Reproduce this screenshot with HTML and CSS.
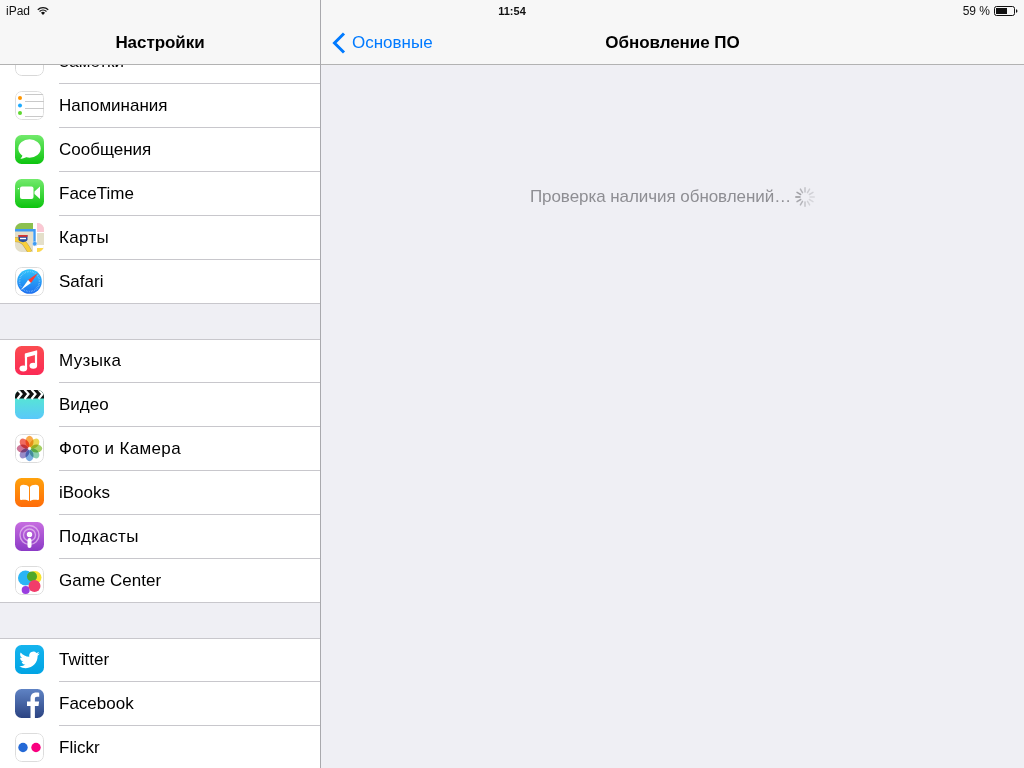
FILE: index.html
```html
<!DOCTYPE html>
<html lang="en">
  <head>
    <meta charset="UTF-8" />
    <title>Обновление ПО</title>
    <link rel="stylesheet" href="styles.css">
  </head>
  <body>
    <div class="screen">
      <div class="status-bar">
        <div class="status-left">
          <span>iPad</span>
          <svg class="wifi" width="12" height="8" viewBox="0 0 13 9">
            <path d="M0.6 3.1a8.4 8.4 0 0 1 11.8 0" fill="none" stroke="#111" stroke-width="1.3" />
            <path d="M2.6 5.1a5.6 5.6 0 0 1 7.8 0" fill="none" stroke="#111" stroke-width="1.3" />
            <path d="M4.2 6.6a3.3 3.3 0 0 1 4.6 0L6.5 9z" fill="#111" />
          </svg>
        </div>
        <div class="status-time">11:54</div>
        <div class="status-right">
          <span>59 %</span>
          <svg width="25" height="10" viewBox="0 0 25 10">
            <rect x="1.5" y="0.5" width="20" height="9" rx="2" fill="none" stroke="#111" />
            <rect x="3" y="2" width="11" height="6" fill="#111" />
            <path d="M23 3.2c1 .2 1.4.8 1.4 1.8s-.4 1.6-1.4 1.8z" fill="#111" />
          </svg>
        </div>
      </div>

      <aside class="sidebar">
        <header class="nav-bar sidebar-nav">
          <h1 class="nav-title">Настройки</h1>
        </header>
        <div class="sidebar-scroll">
          <div class="settings-list">
            <section class="group">
              <div class="row">
                <svg class="icon" viewBox="0 0 29 29">
                  <rect x=".5" y=".5" width="28" height="28" rx="6" fill="#fff" stroke="#d8d8d8" />
                </svg>
                <div class="row-label">Заметки</div>
              </div>
              <div class="row">
                <svg class="icon" viewBox="0 0 29 29">
                  <rect x=".5" y=".5" width="28" height="28" rx="6" fill="#fff" stroke="#dedede" />
                  <path d="M10 3.5H29M10 10.5H29M10 17.5H29M10 25.5H29" stroke="#c9c9c9" />
                  <circle cx="5" cy="7" r="2" fill="#ff9500" />
                  <circle cx="5" cy="14.5" r="2" fill="#1eaaff" />
                  <circle cx="5" cy="22" r="2" fill="#5ed82f" />
                </svg>
                <div class="row-label">Напоминания</div>
              </div>
              <div class="row">
                <svg class="icon" viewBox="0 0 29 29">
                  <defs>
                    <linearGradient id="gMessages" x1="0" y1="0" x2="0" y2="1">
                      <stop offset="0" stop-color="#72ea6c" />
                      <stop offset="1" stop-color="#0dc40f" />
                    </linearGradient>
                  </defs>
                  <rect width="29" height="29" fill="url(#gMessages)" />
                  <ellipse cx="14.5" cy="13.5" rx="11.2" ry="9.2" fill="#fff" />
                  <path d="M7.5 19c.2 2-.8 3.6-2.2 4.6 2.6.2 5-.7 6.4-2.2z" fill="#fff" />
                </svg>
                <div class="row-label">Сообщения</div>
              </div>
              <div class="row">
                <svg class="icon" viewBox="0 0 29 29">
                  <defs>
                    <linearGradient id="gFacetime" x1="0" y1="0" x2="0" y2="1">
                      <stop offset="0" stop-color="#72ea6c" />
                      <stop offset="1" stop-color="#0dc40f" />
                    </linearGradient>
                  </defs>
                  <rect width="29" height="29" fill="url(#gFacetime)" />
                  <rect x="5" y="7.5" width="13.5" height="12.5" rx="2" fill="#fff" />
                  <path d="M19.5 12.600l5.500-5v12.400l-5.500-5z" fill="#fff" />
                  <path d="M2.800 9h1.200v1.200h-1.200z" fill="#fff" />
                </svg>
                <div class="row-label">FaceTime</div>
              </div>
              <div class="row">
                <svg class="icon" viewBox="0 0 29 29">
                  <rect width="29" height="29" fill="#e4dfca" />
                  <rect width="18" height="6" fill="#8cc04f" />
                  <rect x="18" width="4" height="29" fill="#fff" />
                  <rect x="22" width="7" height="9" fill="#fbc8d4" />
                  <rect x="22" y="9" width="7" height="1" fill="#fff" />
                  <rect x="22" y="22" width="7" height="3" fill="#fff" />
                  <rect x="22" y="25" width="7" height="4" fill="#ffd84a" />
                  <path d="M0 16.500c8 0 10 4 15 12.500" fill="none" stroke="#b9a35e" stroke-width="5" />
                  <path d="M0 16.500c8 0 10 4 15 12.500" fill="none" stroke="#f8cf3c" stroke-width="4" />
                  <path d="M0 7.300h19.500v13" fill="none" stroke="#3f9bf2" stroke-width="2.400" />
                  <circle cx="19.700" cy="20.700" r="2.200" fill="#3f9bf2" stroke="#cfe3f5" stroke-width=".6" />
                  <path d="M3.500 12h9v4.500c0 1.500-2 2.300-4.500 2.800-2.500-.5-4.500-1.300-4.500-2.800z" fill="#2a4fa0" />
                  <rect x="3.500" y="12" width="9" height="1.800" fill="#d9362f" />
                  <rect x="5" y="14.800" width="6" height="1.400" fill="#fff" />
                </svg>
                <div class="row-label wide">Карты</div>
              </div>
              <div class="row">
                <svg class="icon" viewBox="0 0 29 29">
                  <defs>
                    <linearGradient id="gSafari" x1="0" y1="0" x2="0" y2="1">
                      <stop offset="0" stop-color="#2fc4fb" />
                      <stop offset="1" stop-color="#1d6ff0" />
                    </linearGradient>
                  </defs>
                  <rect x=".5" y=".5" width="28" height="28" rx="6" fill="#fff" stroke="#dcdcdc" />
                  <circle cx="14.5" cy="14.5" r="12.3" fill="url(#gSafari)" />
                  <circle cx="14.5" cy="14.5" r="10" fill="none" stroke="#cfeaff" stroke-width="1.6" stroke-dasharray=".5 1.2" opacity=".65" />
                  <path d="M23 6l-9.9 7.1 2.8 2.8z" fill="#ff3b30" />
                  <path d="M6 23l7.1-9.9 2.8 2.8z" fill="#fff" />
                </svg>
                <div class="row-label">Safari</div>
              </div>
            </section>

            <section class="group">
              <div class="row">
                <svg class="icon" viewBox="0 0 29 29">
                  <defs>
                    <linearGradient id="gMusic" x1="0" y1="0" x2="0" y2="1">
                      <stop offset="0" stop-color="#fb4c50" />
                      <stop offset="1" stop-color="#fb2a55" />
                    </linearGradient>
                  </defs>
                  <rect width="29" height="29" fill="url(#gMusic)" />
                  <path d="M11 8v14.600M21 5.500v14.200" fill="none" stroke="#fff" stroke-width="2.200" />
                  <path d="M9.900 7.500l12.200-3.300v4.300l-12.200 3.300z" fill="#fff" />
                  <ellipse cx="8.300" cy="22.600" rx="3.800" ry="3" fill="#fff" />
                  <ellipse cx="18.300" cy="19.800" rx="3.800" ry="3" fill="#fff" />
                </svg>
                <div class="row-label wide">Музыка</div>
              </div>
              <div class="row">
                <svg class="icon" viewBox="0 0 29 29">
                  <defs>
                    <linearGradient id="gVideo" x1="0" y1="0" x2="0" y2="1">
                      <stop offset="0" stop-color="#55efc8" />
                      <stop offset="1" stop-color="#5ac8fa" />
                    </linearGradient>
                  </defs>
                  <rect width="29" height="29" fill="url(#gVideo)" />
                  <rect width="29" height="8.500" fill="#111" />
                  <path d="M2.500-.5l4 4.500-4 5M9.500-.5l4 4.500-4 5M16.500-.5l4 4.500-4 5M23.500-.5l4 4.500-4 5" fill="none" stroke="#fff" stroke-width="2.200" />
                </svg>
                <div class="row-label">Видео</div>
              </div>
              <div class="row">
                <svg class="icon" viewBox="0 0 29 29">
                  <rect x=".5" y=".5" width="28" height="28" rx="6" fill="#fff" stroke="#dcdcdc" />
                  <g class="petals">
                    <ellipse cx="14.500" cy="7.500" rx="4" ry="5.700" fill="#f9a136" />
                    <ellipse cx="14.500" cy="7.500" rx="4" ry="5.700" fill="#e9d23e" transform="rotate(45 14.500 14.500)" />
                    <ellipse cx="14.500" cy="7.500" rx="4" ry="5.700" fill="#9bcb55" transform="rotate(90 14.500 14.500)" />
                    <ellipse cx="14.500" cy="7.500" rx="4" ry="5.700" fill="#7cc9a8" transform="rotate(135 14.500 14.500)" />
                    <ellipse cx="14.500" cy="7.500" rx="4" ry="5.700" fill="#6ba3dd" transform="rotate(180 14.500 14.500)" />
                    <ellipse cx="14.500" cy="7.500" rx="4" ry="5.700" fill="#8d7fc2" transform="rotate(225 14.500 14.500)" />
                    <ellipse cx="14.500" cy="7.500" rx="4" ry="5.700" fill="#c8678d" transform="rotate(270 14.500 14.500)" />
                    <ellipse cx="14.500" cy="7.500" rx="4" ry="5.700" fill="#ef5b4f" transform="rotate(315 14.500 14.500)" />
                  </g>
                </svg>
                <div class="row-label wide">Фото и Камера</div>
              </div>
              <div class="row">
                <svg class="icon" viewBox="0 0 29 29">
                  <defs>
                    <linearGradient id="gBooks" x1="0" y1="0" x2="0" y2="1">
                      <stop offset="0" stop-color="#ffa20c" />
                      <stop offset="1" stop-color="#ff6c0a" />
                    </linearGradient>
                  </defs>
                  <rect width="29" height="29" fill="url(#gBooks)" />
                  <path d="M14 9C13 7.500 11 6.700 8.500 6.700 6 6.700 5 7.800 5 9.500V21c0 .8.500 1.200 1.300 1 2.800-.6 5.700-.3 7.700 1z" fill="#fff" />
                  <path d="M15 9C16 7.500 18 6.700 20.500 6.700 23 6.700 24 7.800 24 9.500V21c0 .8-.500 1.200-1.300 1-2.800-.6-5.700-.3-7.700 1z" fill="#fff" />
                </svg>
                <div class="row-label">iBooks</div>
              </div>
              <div class="row">
                <svg class="icon" viewBox="0 0 29 29">
                  <defs>
                    <linearGradient id="gPodcasts" x1="0" y1="0" x2="0" y2="1">
                      <stop offset="0" stop-color="#c76de0" />
                      <stop offset="1" stop-color="#8b3ac6" />
                    </linearGradient>
                  </defs>
                  <rect width="29" height="29" fill="url(#gPodcasts)" />
                  <circle cx="14.500" cy="13" r="9.500" fill="none" stroke="#e9c6f2" stroke-width="1.400" opacity=".7" />
                  <circle cx="14.500" cy="13" r="6" fill="none" stroke="#e9c6f2" stroke-width="1.400" opacity=".7" />
                  <circle cx="14.500" cy="12.500" r="2.700" fill="#fff" />
                  <rect x="12.500" y="16" width="4" height="10" rx="2" fill="#fff" />
                </svg>
                <div class="row-label wide">Подкасты</div>
              </div>
              <div class="row">
                <svg class="icon" viewBox="0 0 29 29">
                  <rect x=".5" y=".5" width="28" height="28" rx="6" fill="#fff" stroke="#dcdcdc" />
                  <circle cx="20" cy="11.500" r="6.500" fill="#f7e32c" />
                  <circle cx="10.500" cy="12" r="7.500" fill="#2bb5f5" />
                  <circle cx="17" cy="10.500" r="5" fill="#4fa82a" />
                  <circle cx="10.700" cy="24" r="4" fill="#9a3de0" />
                  <circle cx="19.500" cy="20" r="6" fill="#f23c6a" />
                </svg>
                <div class="row-label">Game Center</div>
              </div>
            </section>

            <section class="group">
              <div class="row">
                <svg class="icon" viewBox="0 0 29 29">
                  <defs>
                    <linearGradient id="gTwitter" x1="0" y1="0" x2="0" y2="1">
                      <stop offset="0" stop-color="#16b4ee" />
                      <stop offset="1" stop-color="#00a4e4" />
                    </linearGradient>
                  </defs>
                  <rect width="29" height="29" fill="url(#gTwitter)" />
                  <path transform="translate(4.300 4.700) scale(.85)" fill="#fff" d="M23.953 4.570a10 10 0 0 1-2.825.775 4.958 4.958 0 0 0 2.163-2.723c-.951.555-2.005.959-3.127 1.184a4.920 4.920 0 0 0-8.384 4.482C7.690 8.095 4.067 6.130 1.640 3.162a4.822 4.822 0 0 0-.666 2.475c0 1.710.870 3.213 2.188 4.096a4.904 4.904 0 0 1-2.228-.616v.060a4.923 4.923 0 0 0 3.946 4.827 4.996 4.996 0 0 1-2.212.085 4.936 4.936 0 0 0 4.604 3.417 9.867 9.867 0 0 1-6.102 2.105c-.390 0-.779-.023-1.170-.067a13.995 13.995 0 0 0 7.557 2.209c9.053 0 13.998-7.496 13.998-13.985 0-.210 0-.420-.015-.630A9.935 9.935 0 0 0 24 4.590z" />
                </svg>
                <div class="row-label">Twitter</div>
              </div>
              <div class="row">
                <svg class="icon" viewBox="0 0 29 29">
                  <defs>
                    <linearGradient id="gFacebook" x1="0" y1="0" x2="0" y2="1">
                      <stop offset="0" stop-color="#5f83c4" />
                      <stop offset="1" stop-color="#2b4382" />
                    </linearGradient>
                  </defs>
                  <rect width="29" height="29" fill="url(#gFacebook)" />
                  <path d="M15.500 29V17h-3.500v-4.500h3.500V9.500c0-4 2.300-6 5.700-6 1.200 0 2.300.1 3 .2v4h-2.200c-1.700 0-2.100.9-2.100 2.200v2.600h4.200l-.6 4.500h-3.600v12z" fill="#fff" />
                </svg>
                <div class="row-label">Facebook</div>
              </div>
              <div class="row">
                <svg class="icon" viewBox="0 0 29 29">
                  <rect x=".5" y=".5" width="28" height="28" rx="6" fill="#fff" stroke="#dcdcdc" />
                  <circle cx="8" cy="14.500" r="4.700" fill="#2469d6" />
                  <circle cx="21" cy="14.500" r="4.700" fill="#f9007f" />
                </svg>
                <div class="row-label">Flickr</div>
              </div>
            </section>
          </div>
        </div>
      </aside>

      <main class="detail">
        <header class="nav-bar detail-nav">
          <a class="back-link" href="#">
            <svg width="14" height="22" viewBox="0 0 14 22">
              <path d="M12 1.500L2.500 11 12 20.500" fill="none" stroke="#007aff" stroke-width="3" />
            </svg>
            <span>Основные</span>
          </a>
          <h2 class="nav-title">Обновление ПО</h2>
        </header>
        <div class="update-check">
          <span>Проверка наличия обновлений…</span>
          <svg class="spinner" width="20" height="20" viewBox="0 0 20 20">
            <g stroke="#8e8e93" stroke-width="1.500" stroke-linecap="round">
              <path d="M10 .8v4.200" opacity=".45" />
              <path d="M10 .8v4.200" opacity=".35" transform="rotate(30 10 10)" />
              <path d="M10 .8v4.200" opacity=".3" transform="rotate(60 10 10)" />
              <path d="M10 .8v4.200" opacity=".25" transform="rotate(90 10 10)" />
              <path d="M10 .8v4.200" opacity=".25" transform="rotate(120 10 10)" />
              <path d="M10 .8v4.200" opacity=".3" transform="rotate(150 10 10)" />
              <path d="M10 .8v4.200" opacity=".45" transform="rotate(180 10 10)" />
              <path d="M10 .8v4.200" opacity=".6" transform="rotate(210 10 10)" />
              <path d="M10 .8v4.200" opacity=".75" transform="rotate(240 10 10)" />
              <path d="M10 .8v4.200" opacity=".95" transform="rotate(270 10 10)" />
              <path d="M10 .8v4.200" opacity=".8" transform="rotate(300 10 10)" />
              <path d="M10 .8v4.200" opacity=".6" transform="rotate(330 10 10)" />
            </g>
          </svg>
        </div>
      </main>
    </div>
  </body>
</html>
```

FILE: styles.css
```css
* {
  box-sizing: border-box;
  margin: 0;
  padding: 0;
}

body {
  font-family: "Liberation Sans", Arial, sans-serif;
  background-color: #efeff4;
  color: #000;
}

.screen {
  position: relative;
  display: flex;
  width: 1024px;
  height: 768px;
  overflow: hidden;
}

/* sits over both nav bars, time is centred on the whole screen */
.status-bar {
  position: absolute;
  top: 0;
  left: 0;
  width: 100%;
  height: 22px;
  display: grid;
  grid-template-columns: 1fr auto 1fr;
  align-items: center;
  padding: 0 6px;
  font-size: 12px;
  color: #111;
}

.status-left {
  display: flex;
  align-items: center;
  gap: 7px;
}

.status-time {
  font-weight: bold;
  font-size: 11px;
}

.status-right {
  display: flex;
  justify-content: flex-end;
  align-items: center;
  gap: 3px;
}

.nav-bar {
  height: 65px;
  flex-shrink: 0;
  padding-top: 21px;
  background-color: #f7f7f7;
  border-bottom: 1px solid #b2b2b2;
}

.nav-title {
  font-size: 17px;
  font-weight: bold;
  line-height: 43px;
  letter-spacing: -0.05px;
}

.sidebar {
  width: 321px;
  flex-shrink: 0;
  display: flex;
  flex-direction: column;
  border-right: 1px solid #a9a9ad;
}

.sidebar-nav {
  text-align: center;
}

.sidebar-scroll {
  flex: 1;
  overflow: hidden;
}

.settings-list {
  margin-top: -25px;
}

.group {
  background-color: #fff;
  box-shadow: inset 0 1px 0 #c8c7cc, inset 0 -1px 0 #c8c7cc;
  margin-bottom: 35px;
}

.group:first-child {
  box-shadow: inset 0 -1px 0 #c8c7cc;
}

.row {
  display: flex;
  height: 44px;
  padding-left: 15px;
}

.icon {
  display: block;
  width: 29px;
  height: 29px;
  margin-top: 7px;
  border-radius: 6.5px;
  flex-shrink: 0;
}

.petals ellipse {
  opacity: 0.9;
  mix-blend-mode: multiply;
}

.row-label {
  flex: 1;
  margin-left: 15px;
  font-size: 17px;
  line-height: 43px;
  border-bottom: 1px solid #c8c7cc;
}

.row-label.wide {
  letter-spacing: 0.35px;
}

.detail {
  flex: 1;
  display: flex;
  flex-direction: column;
}

.detail-nav {
  display: grid;
  grid-template-columns: 1fr auto 1fr;
  align-items: center;
  padding-left: 11px;
  padding-right: 11px;
}

.back-link {
  display: flex;
  align-items: center;
  gap: 6px;
  font-size: 17px;
  color: #007aff;
  text-decoration: none;
}

.update-check {
  display: flex;
  justify-content: center;
  align-items: center;
  gap: 4px;
  margin-top: 122px;
  font-size: 17px;
  letter-spacing: -0.06px;
  color: #8e8e93;
}
```
